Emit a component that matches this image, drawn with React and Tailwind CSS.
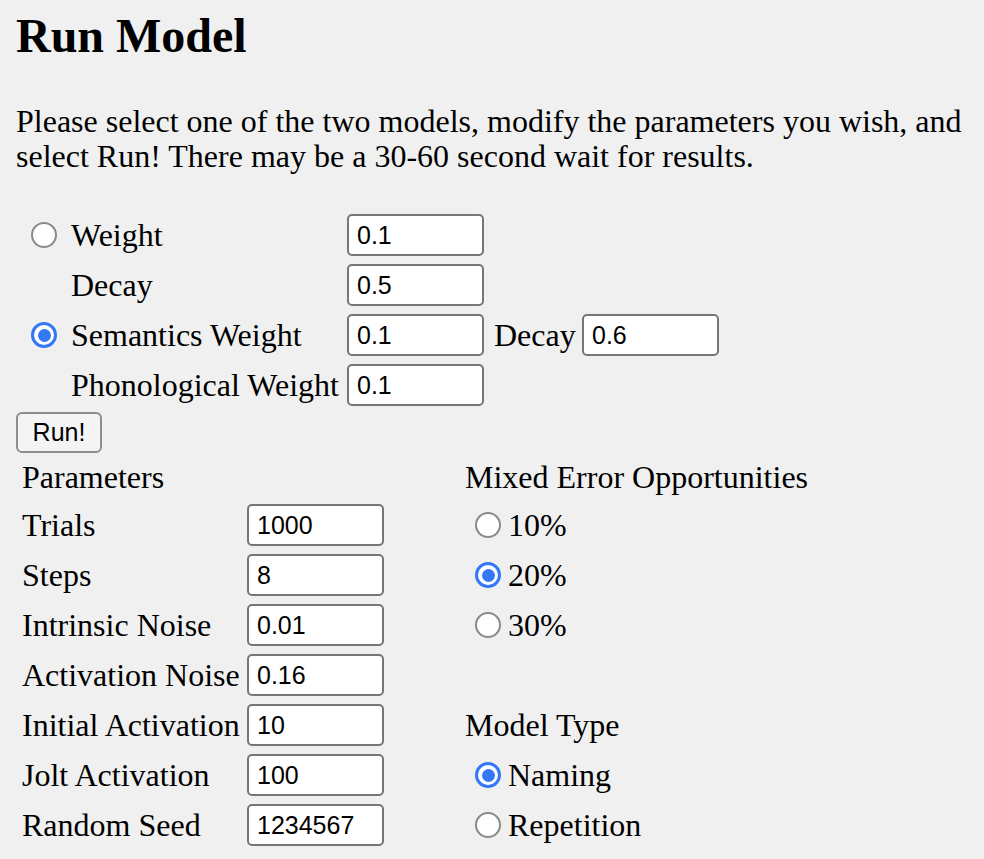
import { useState } from 'react'

const SERIF = "font-['Liberation_Serif','Times_New_Roman',serif]"

function Radio({ checked, onClick }) {
  if (checked) {
    return (
      <span
        onClick={onClick}
        className="flex h-[26px] w-[26px] shrink-0 items-center justify-center rounded-full border-[3px] border-[#3478f6] bg-white"
      >
        <span className="h-[13px] w-[13px] rounded-full bg-[#3478f6]" />
      </span>
    )
  }
  return (
    <span
      onClick={onClick}
      className="block h-[26px] w-[26px] shrink-0 rounded-full border-2 border-[#8a8a8a] bg-white"
    />
  )
}

function Field({ value }) {
  return (
    <input
      defaultValue={value}
      className="box-border h-[42px] w-[137px] rounded-[5px] border-2 border-[#767676] bg-white pl-[8px] font-['Liberation_Sans',Arial,sans-serif] text-[25px] text-black outline-none"
    />
  )
}

function Cell({ children, className = '' }) {
  return <div className={`flex h-[46px] items-center ${className}`}>{children}</div>
}

export default function App() {
  const [model, setModel] = useState('semantics')
  const [mixed, setMixed] = useState('20')
  const [type, setType] = useState('naming')

  return (
    <div className={`min-h-screen bg-[#f0f0f0] px-4 pt-2 pb-2 text-[32px] leading-[37px] text-black ${SERIF}`}>
      <h2 className="text-[48px] font-bold leading-[55px]">Run Model</h2>
      <p className="mt-[41px] leading-[35px]">
        Please select one of the two models, modify the parameters you wish, and
        <br />
        select Run! There may be a 30-60 second wait for results.
      </p>

      {/* model choice */}
      <div className="mt-[38px] grid grid-cols-[55px_276px_147px_88px_138px] gap-y-[4px]">
        <Cell>
          <span className="ml-[15px]">
            <Radio checked={model === 'weight'} onClick={() => setModel('weight')} />
          </span>
        </Cell>
        <Cell>Weight</Cell>
        <Cell><Field value="0.1" /></Cell>
        <Cell />
        <Cell />

        <Cell />
        <Cell>Decay</Cell>
        <Cell><Field value="0.5" /></Cell>
        <Cell />
        <Cell />

        <Cell>
          <span className="ml-[15px]">
            <Radio checked={model === 'semantics'} onClick={() => setModel('semantics')} />
          </span>
        </Cell>
        <Cell>Semantics Weight</Cell>
        <Cell><Field value="0.1" /></Cell>
        <Cell>Decay</Cell>
        <Cell><Field value="0.6" /></Cell>

        <Cell />
        <Cell>Phonological Weight</Cell>
        <Cell><Field value="0.1" /></Cell>
        <Cell />
        <Cell />
      </div>

      <button className="mt-[4px] box-border h-[41px] w-[86px] rounded-[6px] border-2 border-[#8d8d8d] bg-[#f4f4f4] font-['Liberation_Sans',Arial,sans-serif] text-[25px] leading-none text-black">
        Run!
      </button>

      {/* parameters + options */}
      <div className="mt-[4px] grid grid-cols-[225px_218px_1fr] gap-y-[4px] pl-[6px]">
        <div className="flex h-[41px] items-center">Parameters</div>
        <div className="h-[41px]" />
        <div className="flex h-[41px] items-center">Mixed Error Opportunities</div>

        <Cell>Trials</Cell>
        <Cell><Field value="1000" /></Cell>
        <Cell>
          <span className="ml-[10px] mr-[7px]"><Radio checked={mixed === '10'} onClick={() => setMixed('10')} /></span>
          10%
        </Cell>

        <Cell>Steps</Cell>
        <Cell><Field value="8" /></Cell>
        <Cell>
          <span className="ml-[10px] mr-[7px]"><Radio checked={mixed === '20'} onClick={() => setMixed('20')} /></span>
          20%
        </Cell>

        <Cell>Intrinsic Noise</Cell>
        <Cell><Field value="0.01" /></Cell>
        <Cell>
          <span className="ml-[10px] mr-[7px]"><Radio checked={mixed === '30'} onClick={() => setMixed('30')} /></span>
          30%
        </Cell>

        <Cell>Activation Noise</Cell>
        <Cell><Field value="0.16" /></Cell>
        <Cell />

        <Cell>Initial Activation</Cell>
        <Cell><Field value="10" /></Cell>
        <Cell>Model Type</Cell>

        <Cell>Jolt Activation</Cell>
        <Cell><Field value="100" /></Cell>
        <Cell>
          <span className="ml-[10px] mr-[7px]"><Radio checked={type === 'naming'} onClick={() => setType('naming')} /></span>
          Naming
        </Cell>

        <Cell>Random Seed</Cell>
        <Cell><Field value="1234567" /></Cell>
        <Cell>
          <span className="ml-[10px] mr-[7px]"><Radio checked={type === 'repetition'} onClick={() => setType('repetition')} /></span>
          Repetition
        </Cell>
      </div>
    </div>
  )
}
